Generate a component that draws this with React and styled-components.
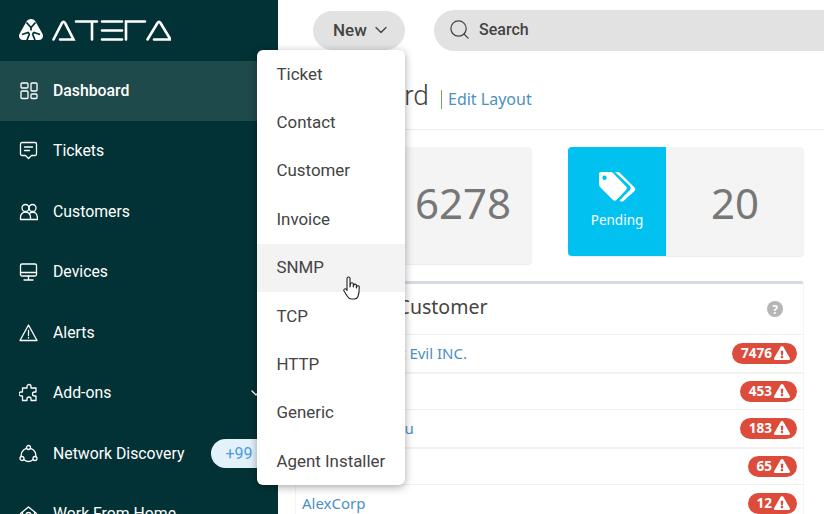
import React from 'react';
import styled, { createGlobalStyle } from 'styled-components';
import { ChevronDown, Search } from 'lucide-react';
import { FaExclamationTriangle } from 'react-icons/fa';

const GlobalStyle = createGlobalStyle`
  html, body {
    margin: 0;
    padding: 0;
    background: #fff;
    font-family: Roboto, "Liberation Sans", sans-serif;
  }
  * { box-sizing: border-box; }
`;

const Page = styled.div`
  position: relative;
  display: flex;
  width: 824px;
  height: 514px;
  overflow: hidden;
`;

const Sidebar = styled.aside`
  width: 278px;
  flex-shrink: 0;
  background: #033236;
  color: #fff;
`;

const LogoRow = styled.div`
  height: 61px;
  padding: 18px 0 0 19px;
`;

const NavItem = styled.div`
  display: flex;
  align-items: center;
  gap: 15px;
  height: ${(p) => (p.$active ? '60px' : '60.5px')};
  padding: 0 0 1px 19px;
  background: ${(p) => (p.$active ? '#1f4a4b' : 'transparent')};
  font-size: 15.8px;
  font-weight: ${(p) => (p.$active ? 500 : 400)};
  white-space: nowrap;
`;

const NavIcon = styled.svg`
  width: 19px;
  height: 19px;
  flex-shrink: 0;
  fill: none;
  stroke: #fff;
  stroke-width: 1.3;
  stroke-linecap: round;
  stroke-linejoin: round;
`;

const CountPill = styled.span`
  margin-left: 12px;
  width: 60px;
  height: 29px;
  padding-left: 14px;
  border-radius: 15px;
  background: #e3f1fb;
  color: #4a9be2;
  font-size: 16px;
  font-weight: 400;
  line-height: 29px;
`;

const NavChevron = styled(ChevronDown)`
  margin-left: auto;
  margin-right: 14px;
  color: #fff;
`;

const Main = styled.main`
  flex: 1;
  min-width: 0;
`;

const TopBar = styled.div`
  display: flex;
  align-items: center;
  gap: 29px;
  height: 61px;
  padding-left: 35px;
`;

const NewButton = styled.div`
  display: flex;
  align-items: center;
  gap: 4px;
  width: 92px;
  height: 39px;
  padding: 0 0 1px 20px;
  border-radius: 20px;
  background: #e2e2e2;
  color: #444;
  font-size: 17px;
  font-weight: 500;
`;

const SearchBox = styled.div`
  display: flex;
  align-items: center;
  gap: 8px;
  flex: 1;
  height: 41px;
  margin-right: -40px;
  padding: 0 0 2px 14px;
  border-radius: 21px;
  background: #e2e2e2;
  color: #444;
  font-size: 16px;
  font-weight: 500;
`;

const TitleRow = styled.div`
  display: flex;
  align-items: baseline;
  height: 69px;
  padding: 18px 0 0 17px;
  border-bottom: 1px solid #ececec;
`;

const Title = styled.h1`
  margin: 0;
  width: 133px;
  color: #444;
  font-size: 28px;
  font-weight: 300;
  white-space: nowrap;
`;

const EditLink = styled.a`
  margin-left: 13px;
  padding-left: 6px;
  border-left: 1px solid #7fa35f;
  color: #4a8fc4;
  font-family: "Noto Sans", sans-serif;
  font-size: 16px;
  line-height: 19px;
`;

const Content = styled.div`
  padding: 17px 20px 0 17px;
`;

const StatsRow = styled.div`
  display: flex;
  align-items: flex-start;
  gap: 36px;
  padding-left: 1px;
`;

const StatCard = styled.div`
  display: flex;
  width: 236px;
  height: ${(p) => p.$height}px;
  border-radius: 4px;
  background: #f4f4f4;
  box-shadow: 0 1px 1px rgba(0, 0, 0, 0.08);
`;

const StatBadge = styled.div`
  display: flex;
  flex-direction: column;
  align-items: center;
  width: 98px;
  padding-top: 24px;
  border-radius: 4px 0 0 4px;
  background: #00c1f0;
  color: #fff;
  font-family: "Noto Sans", sans-serif;
  font-size: 13.5px;
  line-height: 18px;
`;

const TagIcon = styled.svg`
  width: 38px;
  height: 32px;
  margin-bottom: 8px;
  fill: #fff;
`;

const StatValue = styled.div`
  flex: 1;
  padding-top: 26px;
  color: #777;
  font-family: "Noto Sans", sans-serif;
  font-size: 42px;
  line-height: 60px;
  text-align: center;
`;

const Panel = styled.section`
  margin-top: ${(p) => p.$top}px;
  border-top: 3px solid #d5d9e1;
  border-left: 1px solid #f4f4f4;
  border-right: 1px solid #f4f4f4;
  border-radius: 3px 3px 0 0;
`;

const PanelHead = styled.div`
  display: flex;
  align-items: center;
  justify-content: space-between;
  height: 50px;
  padding: 0 20px 6px 17px;
  color: #444;
  font-family: "Noto Sans", sans-serif;
  font-size: 19.5px;
`;

const HelpDot = styled.span`
  display: flex;
  align-items: center;
  justify-content: center;
  width: 16px;
  height: 16px;
  margin-top: 6px;
  border-radius: 50%;
  background: #b5b5b5;
  color: #fff;
  font-size: 12px;
  font-weight: 700;
`;

const Row = styled.div`
  display: flex;
  align-items: center;
  justify-content: space-between;
  height: 37.5px;
  padding: 0 6px;
  border-top: ${(p) => (p.$thick ? '2px' : '1px')} solid #f1f1f1;
  font-family: "Noto Sans", sans-serif;
  font-size: 15px;
`;

const RowLink = styled.a`
  color: #4a8fc4;
`;

const AlertCount = styled.span`
  display: flex;
  align-items: center;
  gap: 2px;
  height: 21px;
  padding: 0 7px 0 9px;
  border-radius: 11px;
  background: #dd4c3b;
  color: #fff;
  font-family: "Noto Sans", sans-serif;
  font-size: 13.5px;
  font-weight: 700;
`;

const Menu = styled.div`
  position: absolute;
  top: 50px;
  left: 257px;
  width: 148px;
  height: 435px;
  border-radius: 6px;
  background: #fff;
  box-shadow: 0 2px 8px rgba(0, 0, 0, 0.35);
`;

const MenuItem = styled.div`
  display: flex;
  align-items: center;
  height: 48.4px;
  padding: 0 0 1px 19.5px;
  background: ${(p) => (p.$hover ? '#f3f3f3' : 'transparent')};
  color: #444;
  font-size: 16.9px;
  white-space: nowrap;
`;

const HandCursor = styled.svg`
  position: absolute;
  top: 276px;
  left: 342px;
  width: 20px;
  height: 25px;
`;

const menuItems = ['Ticket', 'Contact', 'Customer', 'Invoice', 'SNMP', 'TCP', 'HTTP', 'Generic', 'Agent Installer'];

const rows = [
  { name: 'Doctors Planet Evil INC.', count: 7476 },
  { name: 'Acme', count: 453, thick: true },
  { name: 'Kevin Zhang Liu', count: 183 },
  { name: 'Initech', count: 65, thick: true },
  { name: 'AlexCorp', count: 12 },
];

const Logo = () => (
  <svg width="152" height="24" viewBox="0 0 152 24">
    <path d="M12 1c2.200 0 3.600 1 4.800 3l6.500 11.500c1.800 3.200-.2 6.500-3.600 6.500H4.300C.9 22-1.100 18.700.7 15.500L7.200 4C8.400 2 9.800 1 12 1z" fill="#fff" />
    <path d="M7.500 4.500l4.500 5 4.500-5M12 9.500v3M3 16.500l6-2 1.500 1.500M21 16.500l-6-2-1.500 1.500M8 22l2.500-6M16 22l-2.500-6" fill="none" stroke="#033236" strokeWidth="1.800" />
    <g fill="none" stroke="#fff" strokeWidth="2.600" strokeLinecap="round">
      <path d="M34.500 21.500L43 5q1.500-2.500 3 0l8.500 16.500H41" />
      <path d="M57 3.500h21M73 3.500v18" />
      <path d="M83 3.500h20M83 12.500h20M83 21.500h20" />
      <path d="M107 21.500v-18h19" />
      <path d="M128.500 21.500L138.500 5q1.500-2.500 3 0l10 16.500H135" />
    </g>
  </svg>
);

const icons = {
  dashboard: (
    <>
      <rect x="2" y="2" width="7" height="5" rx="1" />
      <rect x="2" y="10" width="7" height="7.500" rx="1" />
      <rect x="12" y="2" width="6" height="8" rx="1" />
      <rect x="12" y="13" width="6" height="4.500" rx="1" />
    </>
  ),
  tickets: (
    <path d="M3 1.500h13a1.500 1.500 0 0 1 1.500 1.500v10a1.500 1.500 0 0 1-1.500 1.500h-3.500l-3 3-3-3H3A1.500 1.500 0 0 1 1.500 13V3A1.500 1.500 0 0 1 3 1.500zM5.500 6h8M5.500 9.500h5" />
  ),
  customers: (
    <>
      <circle cx="6.500" cy="6" r="3.500" />
      <circle cx="13.500" cy="6" r="3.500" />
      <path d="M1.500 17.500v-2.500a5 5 0 0 1 10 0v2.500zM11 11c1-.8 4-1.200 5.500 0s2 2.500 2 6.500h-7" />
    </>
  ),
  devices: (
    <>
      <rect x="1.500" y="2" width="16" height="12" rx="1.500" />
      <path d="M1.500 10.500h16M9.500 14v3.500M5 18h9" />
    </>
  ),
  alerts: <path d="M9.500 2L1 17.500h17zM9.500 7.500v5M9.500 14.500v.5" />,
  addons: (
    <path d="M8 3.500a2 2 0 0 1 4 0V5h5v4h-1.500a2 2 0 0 0 0 4H17v4.500h-5V16a2 2 0 0 0-4 0v1.500H3.500V13H2a2 2 0 0 1 0-4h1.500V5H8z" />
  ),
  network: (
    <>
      <circle cx="9.500" cy="3.500" r="2" />
      <circle cx="3" cy="14.500" r="2" />
      <circle cx="16" cy="14.500" r="2" />
      <path d="M7.600 4.300A7.500 7.500 0 0 0 2.200 12.500M11.400 4.300A7.500 7.500 0 0 1 16.800 12.500M5 15.800a7.500 7.500 0 0 0 9 0" />
    </>
  ),
  home: (
    <>
      <path d="M1.500 9.500l8-6.500 8 6.500M3.500 8v10h12V8" />
      <circle cx="9.500" cy="11" r="2.500" />
    </>
  ),
};

const Nav = ({ icon, children, active, pill, chevron }) => (
  <NavItem $active={active}>
    <NavIcon viewBox="0 0 19 19">{icons[icon]}</NavIcon>
    {children}
    {pill && <CountPill>{pill}</CountPill>}
    {chevron && <NavChevron size={16} />}
  </NavItem>
);

const App = () => (
  <Page>
    <GlobalStyle />
    <Sidebar>
      <LogoRow><Logo /></LogoRow>
      <Nav icon="dashboard" active>Dashboard</Nav>
      <Nav icon="tickets">Tickets</Nav>
      <Nav icon="customers">Customers</Nav>
      <Nav icon="devices">Devices</Nav>
      <Nav icon="alerts">Alerts</Nav>
      <Nav icon="addons" chevron>Add-ons</Nav>
      <Nav icon="network" pill="+99">Network Discovery</Nav>
      <Nav icon="home">Work From Home</Nav>
    </Sidebar>
    <Main>
      <TopBar>
        <NewButton>New <ChevronDown size={20} strokeWidth={1.600} /></NewButton>
        <SearchBox><Search size={23} strokeWidth={1.300} />Search</SearchBox>
      </TopBar>
      <TitleRow>
        <Title>Dashboard</Title>
        <EditLink>Edit Layout</EditLink>
      </TitleRow>
      <Content>
        <StatsRow>
          <StatCard $height={117}>
            <StatBadge>Open</StatBadge>
            <StatValue>6278</StatValue>
          </StatCard>
          <StatCard $height={109}>
            <StatBadge>
              <TagIcon viewBox="0 0 38 32">
                <path d="M3 1h9.500c1 0 1.800.4 2.500 1l13 13.500c1 1.100 1 2.500 0 3.500L18.500 29c-1 1-2.500 1-3.500 0L2 16c-.7-.7-1-1.500-1-2.500V3c0-1.100.9-2 2-2zm3.500 3.500a2.200 2.200 0 1 0 0 4.400 2.200 2.200 0 0 0 0-4.400z" />
                <path d="M17 1h2.500c1 0 1.800.4 2.500 1l14.500 14.500c1 1 1 2.500 0 3.500L25.500 30c-1 1-2.500 1-3.500 0l-.5-.5L31.500 19.500c1.500-1.700 1.500-3.500 0-5z" />
              </TagIcon>
              Pending
            </StatBadge>
            <StatValue>20</StatValue>
          </StatCard>
        </StatsRow>
        <Panel $top={17}>
          <PanelHead>
            Alerts by Customer
            <HelpDot>?</HelpDot>
          </PanelHead>
          {rows.map((r) => (
            <Row key={r.name} $thick={r.thick}>
              <RowLink>{r.name}</RowLink>
              <AlertCount>{r.count} <FaExclamationTriangle size={16} /></AlertCount>
            </Row>
          ))}
        </Panel>
      </Content>
    </Main>
    <Menu>
      {menuItems.map((m) => (
        <MenuItem key={m} $hover={m === 'SNMP'}>{m}</MenuItem>
      ))}
    </Menu>
    <HandCursor viewBox="0 0 20 25">
      <path d="M5 2.500a1.500 1.500 0 0 1 3 0V11l.5-3a1.400 1.400 0 0 1 2.800.300V11l.4-2a1.400 1.400 0 0 1 2.700.400V12l.4-1.500a1.300 1.300 0 0 1 2.500.500c0 4-.3 7-1.300 9.500-.6 1.500-1.700 2.500-3.500 2.500H9.500c-2 0-3-.8-4-2.500L2 15c-.9-1.500 1-3 2.300-1.700L5 14.500z" fill="#fff" stroke="#222" strokeWidth="1.100" strokeLinejoin="round" />
    </HandCursor>
  </Page>
);

export default App;
